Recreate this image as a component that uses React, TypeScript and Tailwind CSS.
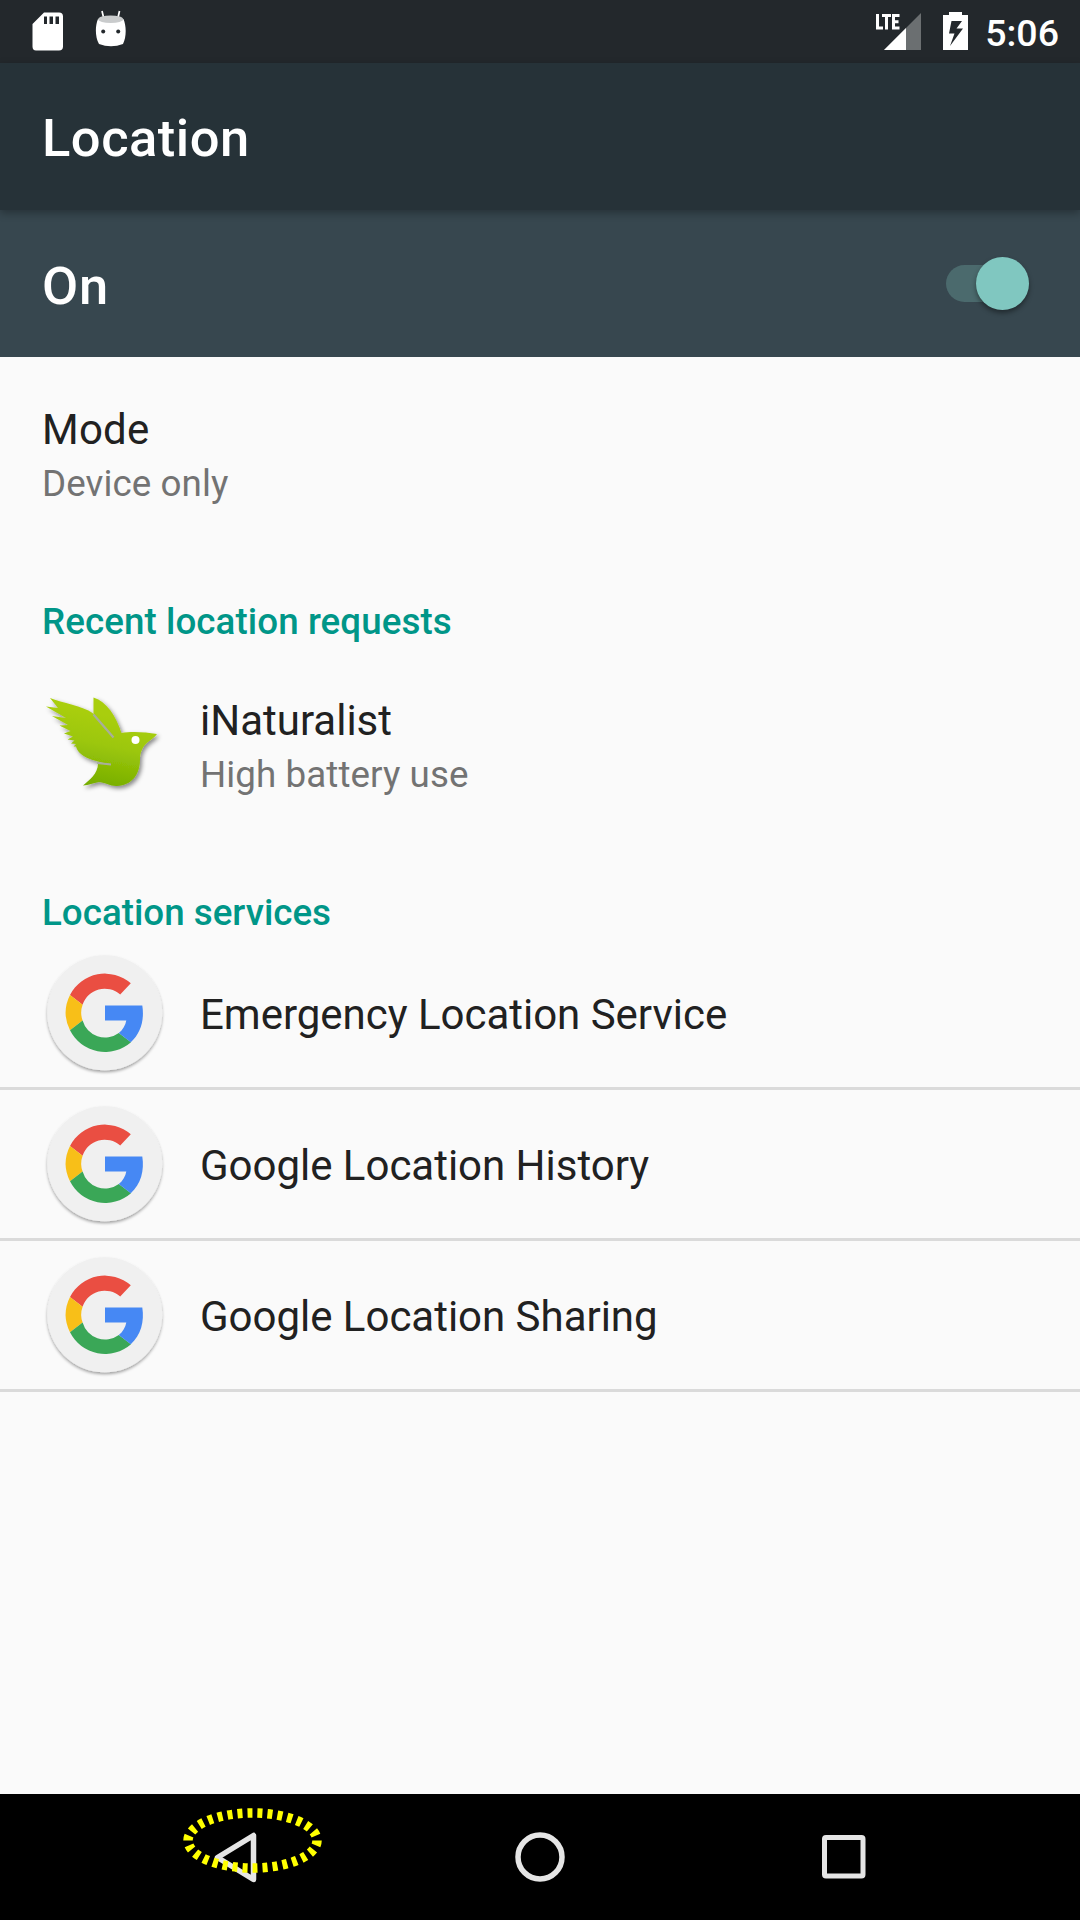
import React from "react";

function GoogleIcon() {
  return (
    <svg width="126" height="126" viewBox="0 0 126 126" className="shrink-0">
      <defs>
        <filter id="disc" x="-10%" y="-10%" width="120%" height="125%">
          <feDropShadow dx="0" dy="2" stdDeviation="1.4" floodColor="#000" floodOpacity="0.35" />
        </filter>
      </defs>
      <circle cx="62.700" cy="60.800" r="57.500" fill="#f0f0f0" filter="url(#disc)" />
      <g transform="translate(0 -0.500)">
        <path d="M28 43.5A39.3 39.3 0 0 1 88.8 31.8L78.2 43.1A23.3 23.3 0 0 0 40.6 53.2Z" fill="#ea4e42" />
        <path d="M28 43.5A39.3 39.3 0 0 0 28 78.8L40.6 69.1A23.3 23.3 0 0 1 40.6 53.2Z" fill="#f8bf18" />
        <path d="M28 78.8A39.3 39.3 0 0 0 89 90.7L76.8 81.5A23.3 23.3 0 0 1 40.6 69.1Z" fill="#3aa757" />
        <path d="M63 54H100.3C102.5 68 99 81.500 88.800 90.700L76.800 81.500C80.800 78.500 83.500 73.500 84.300 69H63Z" fill="#4688f4" />
      </g>
    </svg>
  );
}

function BirdIcon() {
  return (
    <svg width="126" height="110" viewBox="0 0 126 110" className="shrink-0">
      <defs>
        <linearGradient id="bird" x1="0.55" y1="0.2" x2="0.35" y2="1">
          <stop offset="0" stopColor="#a9ce0c" />
          <stop offset="0.4" stopColor="#9cc70a" />
          <stop offset="1" stopColor="#74ac00" />
        </linearGradient>
        <filter id="birdShadow" x="-10%" y="-10%" width="125%" height="125%">
          <feDropShadow dx="2" dy="2.500" stdDeviation="2" floodColor="#000" floodOpacity="0.45" />
        </filter>
      </defs>
      <g filter="url(#birdShadow)">
        <path
          fill="url(#bird)"
          d="M8 8C20 13 41 16 50.500 23L71 47.500L51.500 24V7.500C65 12 74 26 79.500 43C90 41 103 42 115 44C110 51 100 52 98 67C98.500 84 91 95 75 96C69 96.500 62 92 57 92C51 93 47 95 41 95.500C47 90 56 84 56 73.500L69 74C55 72 37 68 34 56.500L31.500 56.500L34 54L29 53.500L32.500 50.500L25.500 49.500L31 46.500L22 43.500L28.500 41L17.500 35.500L26 35L10 26L24 28L4 16.500L16 18Z"
        />
        <circle cx="93.500" cy="50" r="4" fill="#fff" />
      </g>
      <path d="M51.500 24.500L71.500 47.500M55 73L69 74.500" stroke="#a8ae9c" strokeWidth="2.200" fill="none" />
    </svg>
  );
}

function SdIcon() {
  return (
    <svg width="32" height="40" viewBox="0 0 32 40">
      <path fillRule="evenodd" fill="#fff" d="M12 .5H27Q31 .5 31 4.500V34.500Q31 38.500 27 38.500H4Q.5 38.500 .5 34.500V12ZM12 4.500V12H15V4.500ZM17.500 4.500V12H21V4.500ZM23.500 4.500V12H27V4.500Z" />
    </svg>
  );
}

function AndroidHeadIcon() {
  return (
    <svg width="32" height="38" viewBox="0 0 32 38">
      <path d="M7 1L8.800 8.500M24.500 1L22.800 8.500" stroke="#fff" strokeWidth="1.700" />
      <path d="M3 9Q16 14 28.500 9C31.500 16 31.500 27 28 34Q16 38.500 4 34C0 27 0 16 3 9Z" fill="#fff" />
      <ellipse cx="15.700" cy="9.300" rx="12.500" ry="3.800" fill="#c9cbcc" />
      <circle cx="8.200" cy="21.500" r="2" fill="#23282c" />
      <circle cx="23.200" cy="21.500" r="2" fill="#23282c" />
    </svg>
  );
}

function SignalIcon() {
  return (
    <svg width="48" height="40" viewBox="0 0 48 40">
      <path d="M46 1V38H9Z" fill="#6b6f71" />
      <path d="M31 16V38H9Z" fill="#fff" />
      <path d="M2.500 2V16H8M7 3.500H16M11.500 3V17.500M18.500 2V17.500M18 3.500H24.500M18 9.700H23.500M18 16H24.500" stroke="#fff" strokeWidth="3" fill="none" />
    </svg>
  );
}

function BatteryIcon() {
  return (
    <svg width="25" height="38" viewBox="0 0 25 38">
      <path fillRule="evenodd" fill="#fff" d="M6 0H19V3H25V38H0V3H6ZM8.500 9L6 21.500H11.500L7 34L20 16.500H13.500L19 9Z" />
    </svg>
  );
}

function Row({ name }: { name: string }) {
  return (
    <div className="flex h-[151px] items-center border-b-[3px] border-[#dadada] pt-1 pl-[42px]">
      <GoogleIcon />
      <span className="ml-8 text-[42px] leading-[50px] tracking-[-0.02px] text-[#212121]">{name}</span>
    </div>
  );
}

export default function App() {
  return (
    <div className="flex h-[1920px] w-[1080px] flex-col overflow-hidden bg-[#fafafa] font-['Roboto',sans-serif]">
      <div className="flex h-[63px] shrink-0 items-start bg-[#23282c]">
        <div className="mt-3 ml-8"><SdIcon /></div>
        <div className="mt-[10px] ml-[31px]"><AndroidHeadIcon /></div>
        <div className="mt-3 ml-auto"><SignalIcon /></div>
        <div className="mt-3 ml-5"><BatteryIcon /></div>
        <span className="mt-[11px] mr-[21px] ml-[17px] text-[37.500px] leading-[44px] font-medium text-white">5:06</span>
      </div>
      <div className="relative flex h-[147px] shrink-0 items-center bg-[#263238] pt-[3px] pl-[42px] shadow-[0_3px_8px_rgba(0,0,0,0.3)]">
        <h1 className="text-[52.5px] leading-[62px] font-medium tracking-[0.5px] text-white">Location</h1>
      </div>
      <div className="flex h-[147px] shrink-0 items-center bg-[#37474f] pr-[51px] pl-[42px]">
        <span className="pt-[4px] text-[52.5px] leading-[62px] font-medium tracking-[0.8px] text-white">On</span>
        <div className="mb-[1px] ml-auto flex h-[37px] w-[83px] items-center justify-end rounded-full bg-[#4b6a6d]">
          <div className="size-[53px] shrink-0 rounded-full bg-[#80c7c0] shadow-[0_3px_5px_rgba(0,0,0,0.4)]" />
        </div>
      </div>
      <div className="flex h-[582px] shrink-0 flex-col">
        <div className="pt-[48px] pl-[42px]">
          <div className="text-[42px] leading-[50px] tracking-[0.25px] text-[#212121]">Mode</div>
          <div className="mt-[7px] text-[36.75px] leading-[44px] tracking-[0.08px] text-[#737373]">Device only</div>
        </div>
        <h2 className="mt-[94px] pl-[42px] text-[36.75px] leading-[44px] font-medium tracking-[0.07px] text-[#009688]">Recent location requests</h2>
        <div className="mt-[46px] flex pl-[42px]">
          <BirdIcon />
          <div className="ml-8">
            <div className="mt-[6px] text-[42px] leading-[50px] text-[#212121]">iNaturalist</div>
            <div className="mt-[7px] text-[36.75px] leading-[44px] tracking-[0.08px] text-[#737373]">High battery use</div>
          </div>
        </div>
        <h2 className="mt-auto mb-[4px] pl-[42px] text-[36.75px] leading-[44px] font-medium text-[#009688]">Location services</h2>
      </div>
      <Row name="Emergency Location Service" />
      <Row name="Google Location History" />
      <Row name="Google Location Sharing" />
      <div className="mt-auto h-[126px] shrink-0 bg-black">
        <svg width="1080" height="126" viewBox="0 0 1080 126" fill="none">
          <path d="M253.500 41.500V85.500L217.500 63.500Z" stroke="#e5e5e5" strokeWidth="5.500" strokeLinejoin="round" />
          <circle cx="540" cy="63" r="22" stroke="#e5e5e5" strokeWidth="5.500" />
          <rect x="824.500" y="43.500" width="38.500" height="38.500" rx="1.500" stroke="#e5e5e5" strokeWidth="5" />
          <ellipse cx="252.500" cy="46.500" rx="64.500" ry="27.500" stroke="#ffff00" strokeWidth="9.500" strokeDasharray="5 5.010" />
        </svg>
      </div>
    </div>
  );
}
